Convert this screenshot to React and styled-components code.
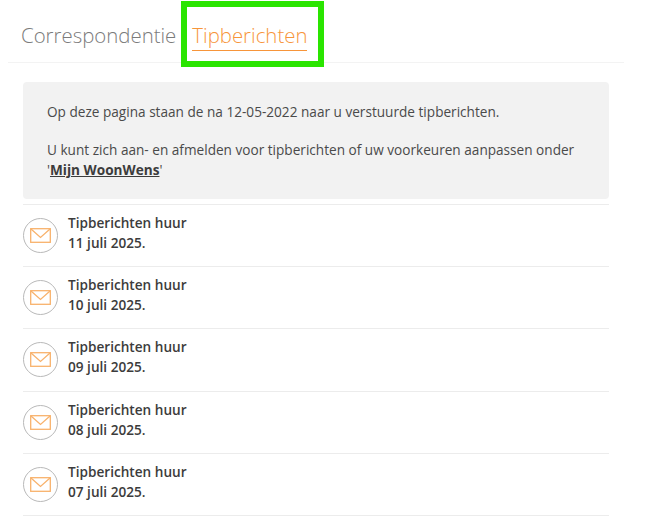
import React from "react";
import styled, { createGlobalStyle } from "styled-components";

const messages = ["11 juli 2025.", "10 juli 2025.", "09 juli 2025.", "08 juli 2025.", "07 juli 2025."];

function MailIcon() {
  return (
    <svg width="21" height="15" viewBox="0 0 21 15" fill="none" stroke="#f8b26c" strokeWidth="1.3">
      <rect x="0.7" y="0.7" width="19.6" height="13.6" />
      <path d="M1 1 L10.5 9.5 L20 1" />
    </svg>
  );
}

function App() {
  return (
    <Page>
      <GlobalStyle />
      <Tabs>
        <Tab>Correspondentie</Tab>
        <ActiveTabFrame>
          <ActiveTab>Tipberichten</ActiveTab>
        </ActiveTabFrame>
      </Tabs>
      <Content>
        <Notice>
          <p>Op deze pagina staan de na 12-05-2022 naar u verstuurde tipberichten.</p>
          <p>
            U kunt zich aan- en afmelden voor tipberichten of uw voorkeuren aanpassen onder '
            <NoticeLink href="#">Mijn WoonWens</NoticeLink>'
          </p>
        </Notice>
        <MessageList>
          {messages.map((date) => (
            <Message key={date}>
              <IconCircle>
                <MailIcon />
              </IconCircle>
              <MessageText>
                Tipberichten huur
                <br />
                {date}
              </MessageText>
            </Message>
          ))}
        </MessageList>
      </Content>
    </Page>
  );
}

const GlobalStyle = createGlobalStyle`
  body {
    margin: 0;
    background: #fff;
    font-family: "Open Sans", sans-serif;
    color: #3c3c3c;
  }
`;

const Page = styled.div`
  width: 657px;
  height: 522px;
  overflow: hidden;
`;

const Tabs = styled.div`
  display: flex;
  align-items: flex-start;
  width: 616px;
  height: 62px;
  margin-left: 8px;
  border-bottom: 1px solid #f3f3f3;
`;

const Tab = styled.div`
  margin: 20px 5px 0 13px;
  font-size: 20.4px;
  line-height: 30px;
  font-weight: 300;
  color: #7b7b7b;
  white-space: nowrap;
`;

const ActiveTabFrame = styled.div`
  flex: none;
  width: 143px;
  height: 66px;
  box-sizing: border-box;
  margin-top: 1px;
  border: 6px solid #2ae500;
  padding: 13px 0 0 5px;
`;

const ActiveTab = styled.div`
  width: 115px;
  font-size: 20.4px;
  line-height: 30px;
  font-weight: 300;
  color: #f7953a;
  border-bottom: 1px solid #f7953a;
  white-space: nowrap;
`;

const Content = styled.div`
  width: 586px;
  margin: 19px 0 0 23px;
`;

const Notice = styled.div`
  box-sizing: border-box;
  height: 117px;
  padding: 20px 24px 0;
  background: #f2f2f2;
  border-radius: 4px;
  font-size: 13.62px;
  line-height: 20px;
  color: #4a4a4a;
  p {
    margin: 0 0 18px;
  }
`;

const NoticeLink = styled.a`
  color: #3c3c3c;
  font-weight: 700;
`;

const MessageList = styled.div`
  margin-top: 5px;
  border-top: 1px solid #ececec;
`;

const Message = styled.div`
  display: flex;
  align-items: center;
  gap: 10px;
  height: 61.2px;
  border-bottom: 1px solid #ececec;
`;

const IconCircle = styled.div`
  display: flex;
  flex: none;
  align-items: center;
  justify-content: center;
  box-sizing: border-box;
  width: 35px;
  height: 35px;
  border: 1px solid #b9b9b9;
  border-radius: 50%;
`;

const MessageText = styled.div`
  margin-bottom: 5px;
  font-size: 13.62px;
  line-height: 20px;
  font-weight: 600;
  color: #3c3c3c;
`;

export default App;
